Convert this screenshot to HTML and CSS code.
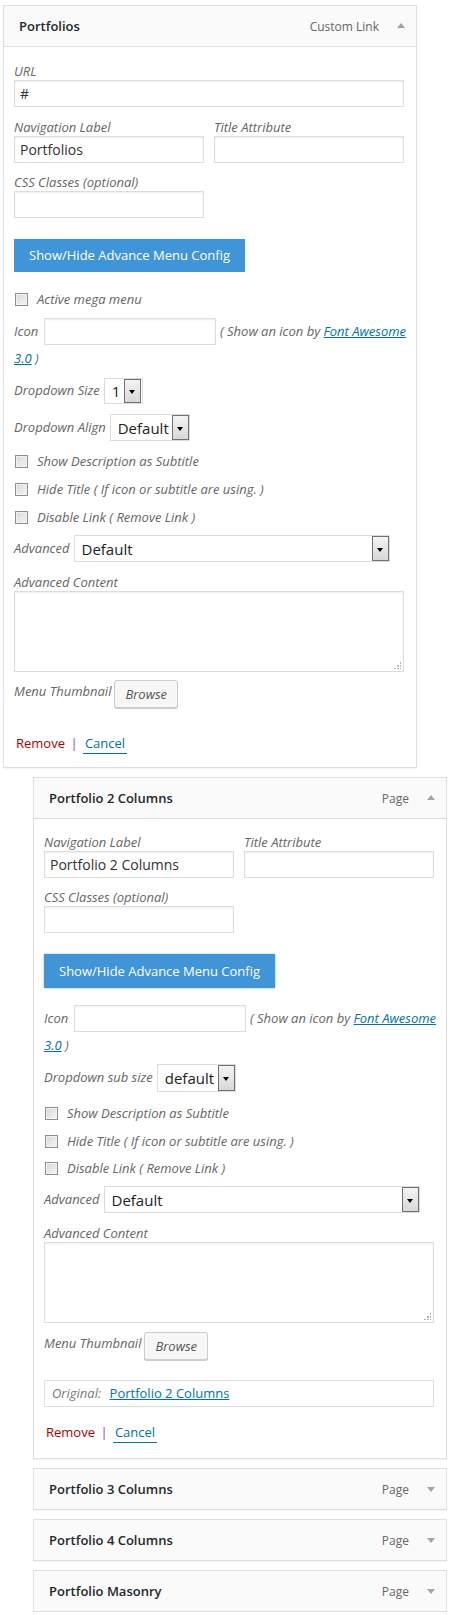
FILE: index.html
```html
<!DOCTYPE html>
<html lang="en">
<head>
    <meta charset="UTF-8">
    <title>Menu items</title>
    <link rel="stylesheet" href="styles.css">
</head>
<body>
<ul class="menu">

    <li class="menu-item">
        <div class="item-bar">
            <span class="item-title">Portfolios</span>
            <span class="item-type">Custom Link</span>
            <span class="item-arrow up"></span>
        </div>
        <div class="item-settings">
            <div class="field first">
                <label>URL</label>
                <input class="text" type="text" value="#">
            </div>
            <div class="field two-col gap-11">
                <div>
                    <label>Navigation Label</label>
                    <input class="text" type="text" value="Portfolios">
                </div>
                <div>
                    <label>Title Attribute</label>
                    <input class="text" type="text" value="">
                </div>
            </div>
            <div class="field half">
                <label>CSS Classes (optional)</label>
                <input class="text" type="text" value="">
            </div>

            <div class="toggle-wrap">
                <span class="btn-toggle">Show/Hide Advance Menu Config</span>
            </div>

            <div class="field check"><span class="checkbox"></span>Active mega menu</div>
            <div class="field icon-row">
                <span class="nowrap">Icon <span class="text icon-input"></span> ( Show an icon by <a href="#">Font Awesome</a></span><br><a href="#">3.0</a> )
            </div>
            <div class="field inline gap-7">
                <label>Dropdown Size</label>
                <span class="select sel-size"><span class="select-value">1</span><span class="select-btn"></span></span>
            </div>
            <div class="field inline">
                <label>Dropdown Align</label>
                <span class="select sel-align"><span class="select-value">Default</span><span class="select-btn"></span></span>
            </div>
            <div class="field check gap-11"><span class="checkbox"></span>Show Description as Subtitle</div>
            <div class="field check"><span class="checkbox"></span>Hide Title ( If icon or subtitle are using. )</div>
            <div class="field check"><span class="checkbox"></span>Disable Link ( Remove Link )</div>
            <div class="field inline gap-9">
                <label>Advanced</label>
                <span class="select sel-adv"><span class="select-value">Default</span><span class="select-btn"></span></span>
            </div>
            <div class="field gap-11">
                <label>Advanced Content</label>
                <div class="textarea"><span class="grip"></span></div>
            </div>
            <div class="field thumb gap-8">
                <label>Menu Thumbnail</label>
                <span class="btn-browse">Browse</span>
            </div>

            <div class="item-actions gap-26">
                <a class="remove" href="#">Remove</a> <span class="sep">|</span> <a class="cancel" href="#">Cancel</a>
            </div>
        </div>
    </li>

    <li class="menu-item depth-1">
        <div class="item-bar">
            <span class="item-title">Portfolio 2 Columns</span>
            <span class="item-type">Page</span>
            <span class="item-arrow up"></span>
        </div>
        <div class="item-settings">
            <div class="field first two-col">
                <div>
                    <label>Navigation Label</label>
                    <input class="text" type="text" value="Portfolio 2 Columns">
                </div>
                <div>
                    <label>Title Attribute</label>
                    <input class="text" type="text" value="">
                </div>
            </div>
            <div class="field half">
                <label>CSS Classes (optional)</label>
                <input class="text" type="text" value="">
            </div>

            <div class="toggle-wrap tight">
                <span class="btn-toggle focus">Show/Hide Advance Menu Config</span>
            </div>

            <div class="field icon-row">
                <span class="nowrap">Icon <span class="text icon-input"></span> ( Show an icon by <a href="#">Font Awesome</a></span><br><a href="#">3.0</a> )
            </div>
            <div class="field inline gap-6">
                <label>Dropdown sub size</label>
                <span class="select sel-sub"><span class="select-value">default</span><span class="select-btn"></span></span>
            </div>
            <div class="field check gap-12"><span class="checkbox"></span>Show Description as Subtitle</div>
            <div class="field check"><span class="checkbox"></span>Hide Title ( If icon or subtitle are using. )</div>
            <div class="field check gap-9"><span class="checkbox"></span>Disable Link ( Remove Link )</div>
            <div class="field inline gap-9">
                <label>Advanced</label>
                <span class="select sel-adv"><span class="select-value">Default</span><span class="select-btn"></span></span>
            </div>
            <div class="field gap-11">
                <label>Advanced Content</label>
                <div class="textarea"><span class="grip"></span></div>
            </div>
            <div class="field thumb gap-9">
                <label>Menu Thumbnail</label>
                <span class="btn-browse">Browse</span>
            </div>

            <div class="original">
                Original: <a href="#">Portfolio 2 Columns</a>
            </div>

            <div class="item-actions gap-16">
                <a class="remove" href="#">Remove</a> <span class="sep">|</span> <a class="cancel" href="#">Cancel</a>
            </div>
        </div>
    </li>

    <li class="menu-item depth-1 closed">
        <div class="item-bar">
            <span class="item-title">Portfolio 3 Columns</span>
            <span class="item-type">Page</span>
            <span class="item-arrow down"></span>
        </div>
    </li>

    <li class="menu-item depth-1 closed">
        <div class="item-bar">
            <span class="item-title">Portfolio 4 Columns</span>
            <span class="item-type">Page</span>
            <span class="item-arrow down"></span>
        </div>
    </li>

    <li class="menu-item depth-1 closed">
        <div class="item-bar">
            <span class="item-title">Portfolio Masonry</span>
            <span class="item-type">Page</span>
            <span class="item-arrow down"></span>
        </div>
    </li>

</ul>
</body>
</html>
```

FILE: styles.css
```css
body {
    margin: 0;
    background: #fff;
    font-family: "Open Sans", "Liberation Sans", sans-serif;
    font-size: 13px;
    color: #444;
}

.menu {
    list-style: none;
    margin: 0;
    padding: 5px 0 0 3px;
}

/* menu item box */
.menu-item {
    width: 414px;
    box-sizing: border-box;
    margin-top: 9px;
    border: 1px solid #dfdfdf;
    background: #fff;
    box-shadow: 0 1px 1px rgba(0, 0, 0, 0.04);
}

.menu-item:first-child {
    margin-top: 0;
}

.depth-1 {
    margin-left: 30px;
}

.item-bar {
    height: 40px;
    display: flex;
    align-items: center;
    padding: 0 11px 0 15px;
    background: #fafafa;
    border-bottom: 1px solid #dfdfdf;
}

.closed .item-bar {
    border-bottom: none;
}

.item-title {
    flex: 1;
    font-size: 13px;
    font-weight: 600;
    color: #23282d;
}

.item-type {
    color: #666;
    font-size: 12px;
}

.item-arrow {
    width: 0;
    height: 0;
    margin-left: 18px;
    border-left: 4px solid transparent;
    border-right: 4px solid transparent;
}

.item-arrow.up {
    border-bottom: 5px solid #a0a5aa;
    margin-top: -2px;
}

.item-arrow.down {
    border-top: 5px solid #a0a5aa;
    margin-top: 1px;
}

/* settings */
.item-settings {
    padding: 15px 12px 15px 10px;
}

.depth-1 .item-settings {
    padding-top: 14px;
    padding-bottom: 17px;
}

.field {
    margin-top: 10px;
    font-style: italic;
    color: #666;
    line-height: 18px;
}

.field.first {
    margin-top: 0;
}

.field label {
    display: block;
    font-style: italic;
    color: #666;
}

.gap-6 { margin-top: 6px; }
.gap-7 { margin-top: 7px; }
.gap-8 { margin-top: 8px; }
.gap-9 { margin-top: 9px; }
.gap-11 { margin-top: 11px; }
.gap-12 { margin-top: 12px; }
.gap-16 { margin-top: 16px; }
.gap-26 { margin-top: 26px; }

.text {
    display: block;
    width: 100%;
    height: 27px;
    box-sizing: border-box;
    margin: 0;
    padding: 0 5px;
    border: 1px solid #ddd;
    box-shadow: inset 0 1px 2px rgba(0, 0, 0, 0.07);
    background: #fff;
    font-family: "Open Sans", "Liberation Sans", sans-serif;
    font-size: 14px;
    color: #333;
    outline: none;
}

.two-col {
    display: grid;
    grid-template-columns: 190px 190px;
    column-gap: 10px;
}

.half {
    width: 190px;
}

/* blue toggle button */
.toggle-wrap {
    margin: 21px 0 18px;
}

.toggle-wrap.tight {
    margin-bottom: 17px;
}

.btn-toggle {
    display: inline-block;
    height: 33px;
    line-height: 33px;
    padding: 0 15px;
    background: #3f95d8;
    color: #fff;
    font-size: 13px;
}

.btn-toggle.focus {
    height: 34px;
    line-height: 34px;
    box-shadow: 0 0 2px rgba(80, 160, 220, 0.7);
}

/* checkboxes */
.check {
    display: flex;
    align-items: center;
    padding-left: 1px;
}

.checkbox {
    width: 11px;
    height: 11px;
    margin-right: 9px;
    border: 1px solid #8f8f8f;
    background: linear-gradient(135deg, #d6d6d6, #f6f6f6);
    box-shadow: inset 0 0 0 1px #f2f2f2;
}

/* icon row */
.icon-row {
    line-height: 26px;
}

.nowrap {
    white-space: nowrap;
}

.icon-input {
    display: inline-block;
    width: 172px;
    vertical-align: middle;
    margin: -2px 1px 0 2px;
}

.field a {
    color: #0074a2;
    text-decoration: underline;
}

/* fake selects */
.inline {
    display: flex;
    align-items: center;
}

.inline label {
    margin-right: 4px;
    margin-top: -2px;
}

.select {
    display: flex;
    box-sizing: border-box;
    border: 1px solid #dcdcdc;
    background: #fff;
    font-style: normal;
}

.select-value {
    flex: 1;
    padding-left: 7px;
    font-size: 15px;
    color: #222;
    display: flex;
    align-items: center;
}

.select-btn {
    position: relative;
    width: 15px;
    border: 1px solid #707070;
    background: linear-gradient(#f4f4f4, #d8d8d8);
}

.select-btn::after {
    content: "";
    position: absolute;
    left: 4px;
    top: 50%;
    margin-top: -1px;
    border-left: 3px solid transparent;
    border-right: 3px solid transparent;
    border-top: 4px solid #000;
}

.sel-size { width: 39px; height: 26px; }
.sel-size .select-btn { margin: 0 1px 0 0; }
.sel-align { width: 80px; height: 27px; }
.sel-sub { width: 79px; height: 28px; }
.sel-adv { width: 316px; height: 27px; }

/* textarea */
.textarea {
    position: relative;
    height: 81px;
    box-sizing: border-box;
    border: 1px solid #ddd;
    box-shadow: inset 0 1px 2px rgba(0, 0, 0, 0.07);
}

.grip {
    position: absolute;
    right: 2px;
    bottom: 2px;
    width: 7px;
    height: 7px;
    background:
        radial-gradient(circle, #999 0.6px, transparent 1px) 6px 0 / 2px 2px no-repeat,
        radial-gradient(circle, #999 0.6px, transparent 1px) 3px 3px / 2px 2px no-repeat,
        radial-gradient(circle, #999 0.6px, transparent 1px) 6px 3px / 2px 2px no-repeat,
        radial-gradient(circle, #999 0.6px, transparent 1px) 0 6px / 2px 2px no-repeat,
        radial-gradient(circle, #999 0.6px, transparent 1px) 3px 6px / 2px 2px no-repeat,
        radial-gradient(circle, #999 0.6px, transparent 1px) 6px 6px / 2px 2px no-repeat;
}

/* thumbnail */
.thumb {
    display: flex;
    align-items: flex-start;
}

.thumb label {
    margin-top: 2px;
    margin-right: 3px;
}

.btn-browse {
    display: inline-block;
    height: 26px;
    line-height: 26px;
    padding: 0 10px;
    border: 1px solid #ccc;
    border-radius: 3px;
    background: #f7f7f7;
    box-shadow: 0 1px 0 #ccc;
    font-style: italic;
    color: #555;
}

/* original link */
.original {
    margin-top: 20px;
    height: 27px;
    line-height: 25px;
    box-sizing: border-box;
    padding: 0 7px;
    border: 1px solid #dfdfdf;
    font-style: italic;
    color: #777;
}

.original a {
    margin-left: 5px;
    font-style: normal;
    color: #0074a2;
    text-decoration: underline;
}

/* remove / cancel */
.item-actions {
    line-height: 18px;
    padding-left: 2px;
}

.item-actions a {
    text-decoration: none;
}

.remove {
    color: #a00;
}

.sep {
    color: #8a4b8f;
    margin: 0 2px;
}

.cancel {
    color: #0074a2;
    padding: 0 2px 1px;
    border-bottom: 1px solid #0074a2;
}
```
